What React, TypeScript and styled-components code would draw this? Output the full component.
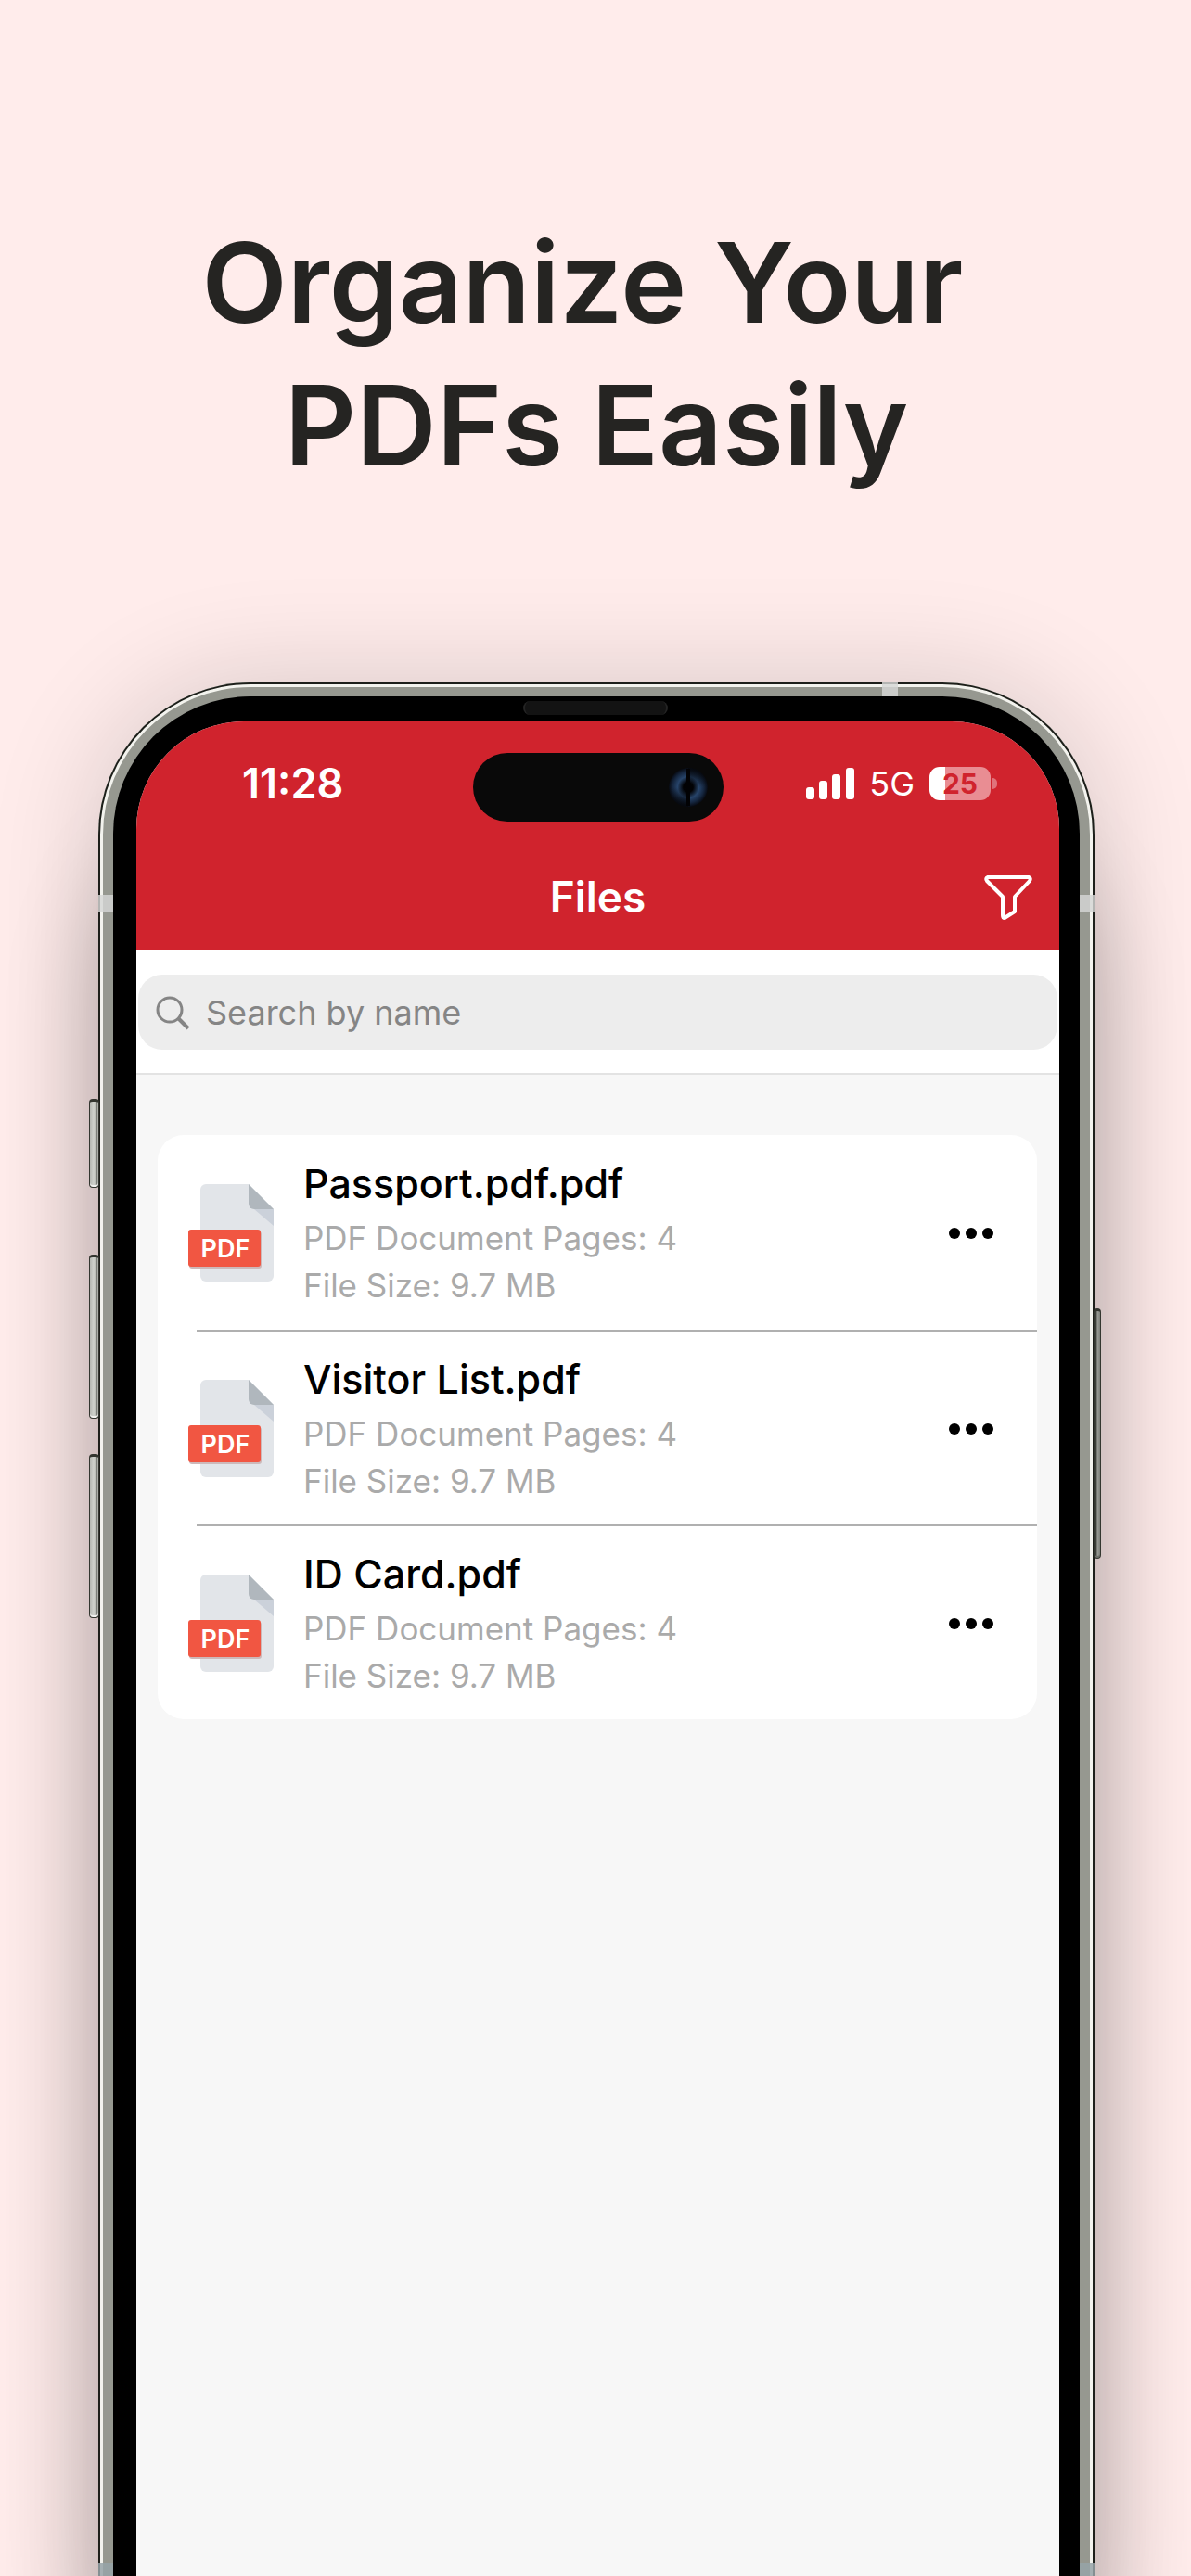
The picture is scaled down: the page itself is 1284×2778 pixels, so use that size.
import React from "react";
import styled, { createGlobalStyle } from "styled-components";

const UI_FONT = `Inter, "Noto Sans", sans-serif`;
const RED = "#d0232d";

const GlobalStyle = createGlobalStyle`
  *, *::before, *::after { box-sizing: border-box; }
  body { margin: 0; background: #ffeceb; }
  button { padding: 0; border: 0; background: none; color: inherit; font: inherit; cursor: pointer; }
`;

const Page = styled.main`
  display: flex;
  flex-direction: column;
  min-height: 100vh;
  overflow: hidden;
  padding: 228px 104px 0 106px;
  background: #ffeceb;
  font-family: ${UI_FONT};
`;

const Headline = styled.h1`
  margin: 0 0 200px;
  color: #252422;
  font-size: 120px;
  font-weight: 600;
  line-height: 154px;
  text-align: center;
`;

const Phone = styled.section`
  position: relative;
  display: flex;
  flex: 1;
  flex-direction: column;
  margin-bottom: -60px;
  padding: 15px 16px 0;
  border-radius: 164px 164px 0 0;
  background: #969890;
  box-shadow:
    inset 0 0 0 2px #1d1f1a,
    inset 0 0 0 5px #f3f3ee,
    0 0 120px rgba(0, 0, 0, 0.16),
    0 160px 100px rgba(0, 0, 0, 0.24);
`;

const SideButton = styled.span<{ $side: "left" | "right"; $top: number; $height: number }>`
  position: absolute;
  top: ${(p) => p.$top}px;
  ${(p) => p.$side}: ${(p) => (p.$side === "left" ? -10 : -7)}px;
  width: ${(p) => (p.$side === "left" ? 11 : 8)}px;
  height: ${(p) => p.$height}px;
  border: 1px solid #33362f;
  border-top-width: 3px;
  border-radius: 4px;
  background: ${(p) =>
    p.$side === "left"
      ? "linear-gradient(90deg, #b4b7b1, #d0d3cd 45%, #b9bcb5 65%, #6c6f69 80%, #c4c6c0)"
      : "linear-gradient(90deg, #3c3f38 30%, #9a9c96 50%, #7c7f78)"};
  box-shadow: inset 0 -2px 0 ${(p) => (p.$side === "left" ? "#f1f1ee" : "#6c6f69")};
`;

const AntennaBand = styled.span<{ $edge: "top" | "left" | "right" | "footLeft" | "footRight" }>`
  position: absolute;
  background: rgba(214, 215, 213, 0.82);
  ${(p) =>
    ({
      top: "top: 0; right: 212px; width: 17px; height: 15px;",
      left: "top: 229px; left: 0; width: 16px; height: 18px;",
      right: "top: 229px; right: 0; width: 16px; height: 18px;",
      footLeft: "bottom: 56px; left: 0; width: 16px; height: 18px; background: rgba(150, 163, 168, 0.85);",
      footRight: "bottom: 56px; right: 0; width: 16px; height: 18px; background: rgba(150, 163, 168, 0.85);",
    })[p.$edge]}
`;

const Bezel = styled.div`
  display: flex;
  flex: 1;
  flex-direction: column;
  padding: 0 22px 0 25px;
  border-radius: 148px 148px 0 0;
  background: #000;
`;

const SpeakerRow = styled.div`
  display: flex;
  height: 27px;
  align-items: center;
  justify-content: center;
  padding: 0 6px 2px 0;
`;

const Speaker = styled.span`
  width: 156px;
  height: 15px;
  border: 1px solid #242424;
  border-width: 0 2px;
  border-radius: 8px;
  background: #131313;
`;

const Screen = styled.div`
  display: flex;
  flex: 1;
  flex-direction: column;
  overflow: hidden;
  border-radius: 116px 116px 0 0;
  background: #f7f7f7;
`;

const AppHeader = styled.header`
  background: ${RED};
  color: #fff;
`;

const StatusBar = styled.div`
  display: grid;
  grid-template-columns: 1fr 270px 1fr;
  align-items: start;
  padding: 34px 67px 22px;
`;

const Clock = styled.time`
  padding-left: 47px;
  font-size: 45px;
  font-weight: 600;
  line-height: 66px;
`;

const Island = styled.div`
  display: flex;
  height: 74px;
  align-items: center;
  justify-content: flex-end;
  padding-right: 16px;
  border-radius: 37px;
  background: #090909;
`;

const Indicators = styled.div`
  display: flex;
  height: 66px;
  align-items: center;
  justify-content: flex-end;
  gap: 16px;
  font-size: 36px;
`;

const Battery = styled.div`
  display: flex;
  align-items: center;
  gap: 2px;
`;

const BatteryBody = styled.span`
  width: 66px;
  height: 36px;
  border-radius: 11px;
  background: linear-gradient(90deg, #fff 17px, #e98d93 17px);
  color: ${RED};
  font-size: 30px;
  font-weight: 700;
  line-height: 36px;
  text-align: center;
`;

const BatteryTip = styled.span`
  width: 5px;
  height: 12px;
  border-radius: 0 6px 6px 0;
  background: #e0737b;
`;

const TitleBar = styled.div`
  display: grid;
  height: 117px;
  grid-template-columns: 1fr auto 1fr;
  align-items: center;
  padding: 0 27px;
`;

const Title = styled.h2`
  grid-column: 2;
  margin: 0;
  font-size: 46px;
  font-weight: 600;
  line-height: 60px;
`;

const FilterButton = styled.button`
  display: flex;
  justify-self: end;
`;

const SearchBar = styled.form`
  padding: 26px 2px 25px;
  border-bottom: 2px solid #e3e3e3;
  background: #fff;
`;

const SearchField = styled.label`
  display: flex;
  height: 81px;
  align-items: center;
  gap: 17px;
  padding: 0 18px;
  border-radius: 26px;
  background: #ededed;
`;

const SearchInput = styled.input`
  min-width: 0;
  flex: 1;
  padding: 0;
  border: 0;
  outline: 0;
  background: none;
  color: #222;
  font-family: ${UI_FONT};
  font-size: 36px;
  line-height: 48px;
  &::placeholder { color: #858585; opacity: 1; }
`;

const FileList = styled.ul`
  margin: 65px 24px 0 23px;
  padding: 0;
  border-radius: 28px;
  background: #fff;
  list-style: none;
`;

const FileRow = styled.li`
  display: flex;
  height: 210px;
  align-items: center;
  margin-left: 42px;
  padding: 2px 44px 0 0;
  & + & { border-top: 2px solid #b0b0b0; }
`;

const FileIcon = styled.svg`
  flex: none;
  margin-left: -10px;
`;

const FileInfo = styled.div`
  display: flex;
  min-width: 0;
  flex: 1;
  flex-direction: column;
  padding-left: 29px;
`;

const FileName = styled.h3`
  margin: 0 0 6px;
  color: #000;
  font-size: 43px;
  font-weight: 500;
  line-height: 56px;
`;

const FileMeta = styled.p`
  margin: 0;
  color: #aaa;
  font-size: 35px;
  line-height: 51px;
`;

const MoreButton = styled.button`
  display: flex;
`;

const files = [
  { name: "Passport.pdf.pdf", pages: 4, size: "9.7 MB" },
  { name: "Visitor List.pdf", pages: 4, size: "9.7 MB" },
  { name: "ID Card.pdf", pages: 4, size: "9.7 MB" },
];

function Camera() {
  return (
    <svg width="44" height="44" viewBox="0 0 44 44" aria-hidden="true">
      <defs>
        <radialGradient id="lens">
          <stop offset="0.25" stopColor="#020204" />
          <stop offset="0.55" stopColor="#27446a" />
          <stop offset="0.8" stopColor="#15263f" />
          <stop offset="1" stopColor="#070a12" />
        </radialGradient>
        <linearGradient id="shade" x1="0" y1="0" x2="0" y2="1">
          <stop offset="0" stopColor="#06080d" stopOpacity="0.9" />
          <stop offset="0.5" stopColor="#06080d" stopOpacity="0" />
        </linearGradient>
        <linearGradient id="shadeLow" x1="0" y1="1" x2="0" y2="0">
          <stop offset="0" stopColor="#06080d" stopOpacity="0.9" />
          <stop offset="0.5" stopColor="#06080d" stopOpacity="0" />
        </linearGradient>
      </defs>
      <circle cx="22" cy="22" r="21" fill="url(#lens)" />
      <path d="M22 1a21 21 0 0 1 0 42z" fill="url(#shade)" />
      <path d="M22 1a21 21 0 0 0 0 42z" fill="url(#shadeLow)" />
      <path d="M22 2v40" stroke="#020204" strokeWidth="4" />
    </svg>
  );
}

function Signal() {
  return (
    <svg width="52" height="34" viewBox="0 0 52 34" fill="#fff" aria-hidden="true">
      <rect x="0" y="21" width="9" height="13" rx="3" />
      <rect x="14" y="14" width="9" height="20" rx="3" />
      <rect x="28" y="7" width="9" height="27" rx="3" />
      <rect x="43" y="0" width="9" height="34" rx="3" />
    </svg>
  );
}

function PdfIcon() {
  return (
    <FileIcon width="96" height="112" viewBox="0 0 96 112" aria-hidden="true">
      <path d="M20 3h46l27 27v72a6 6 0 0 1-6 6H20a6 6 0 0 1-6-6V9a6 6 0 0 1 6-6z" fill="#e2e5e9" />
      <path d="M72 30h21v18z" fill="#cbd1da" />
      <path d="M66 3l27 27H72a6 6 0 0 1-6-6z" fill="#b0b7bd" />
      <rect x="2" y="54" width="78" height="40" rx="3" fill="#cdb9ba" />
      <rect x="1" y="52" width="78" height="40" rx="3" fill="#f15642" />
      <text
        x="41"
        y="82"
        textAnchor="middle"
        fill="#fff"
        fontFamily={UI_FONT}
        fontSize="27"
        fontWeight="600"
      >
        PDF
      </text>
    </FileIcon>
  );
}

export default function App() {
  return (
    <>
      <GlobalStyle />
      <Page>
        <Headline>
          Organize Your&nbsp;
          <br />
          PDFs Easily
        </Headline>
        <Phone>
          <SideButton $side="left" $top={449} $height={96} />
          <SideButton $side="left" $top={617} $height={177} />
          <SideButton $side="left" $top={832} $height={177} />
          <SideButton $side="right" $top={675} $height={270} />
          <AntennaBand $edge="top" />
          <AntennaBand $edge="left" />
          <AntennaBand $edge="right" />
          <AntennaBand $edge="footLeft" />
          <AntennaBand $edge="footRight" />
          <Bezel>
            <SpeakerRow>
              <Speaker />
            </SpeakerRow>
            <Screen>
              <AppHeader>
                <StatusBar>
                  <Clock>11:28</Clock>
                  <Island>
                    <Camera />
                  </Island>
                  <Indicators>
                    <Signal />
                    <span>5G</span>
                    <Battery>
                      <BatteryBody>25</BatteryBody>
                      <BatteryTip />
                    </Battery>
                  </Indicators>
                </StatusBar>
                <TitleBar>
                  <Title>Files</Title>
                  <FilterButton type="button" aria-label="Filter files">
                    <svg
                      width="56"
                      height="52"
                      viewBox="0 0 56 52"
                      fill="none"
                      stroke="#fff"
                      strokeWidth="4"
                      strokeLinejoin="round"
                      aria-hidden="true"
                    >
                      <path d="M6 5h44q3 1 1 4L35 26v16l-11 7q-2 0-2-3V26L5 9q-2-3 1-4z" />
                    </svg>
                  </FilterButton>
                </TitleBar>
              </AppHeader>
              <SearchBar role="search">
                <SearchField>
                  <svg
                    width="38"
                    height="38"
                    viewBox="0 0 38 38"
                    fill="none"
                    stroke="#858585"
                    strokeWidth="3"
                    aria-hidden="true"
                  >
                    <circle cx="16" cy="16" r="13" />
                    <path d="M25 25l11 11" strokeWidth="4" />
                  </svg>
                  <SearchInput type="search" placeholder="Search by name" aria-label="Search by name" />
                </SearchField>
              </SearchBar>
              <FileList>
                {files.map((file) => (
                  <FileRow key={file.name}>
                    <PdfIcon />
                    <FileInfo>
                      <FileName>{file.name}</FileName>
                      <FileMeta>PDF Document Pages: {file.pages}</FileMeta>
                      <FileMeta>File Size: {file.size}</FileMeta>
                    </FileInfo>
                    <MoreButton type="button" aria-label={`More options for ${file.name}`}>
                      <svg width="54" height="20" viewBox="0 0 54 20" aria-hidden="true">
                        <circle cx="9" cy="10" r="6" />
                        <circle cx="27" cy="10" r="6" />
                        <circle cx="45" cy="10" r="6" />
                      </svg>
                    </MoreButton>
                  </FileRow>
                ))}
              </FileList>
            </Screen>
          </Bezel>
        </Phone>
      </Page>
    </>
  );
}
